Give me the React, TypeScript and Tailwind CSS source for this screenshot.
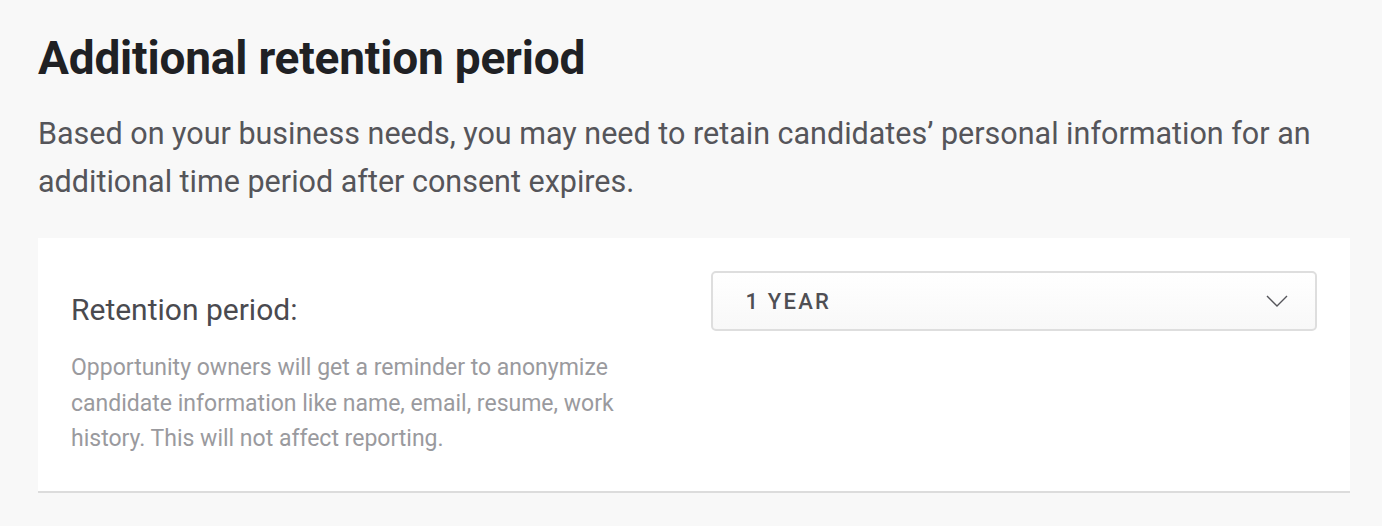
import React from 'react';

const font = { fontFamily: 'Roboto, "Noto Sans", sans-serif' };

export default function App() {
  return (
    <div style={font} className="min-h-[526px] bg-[#f8f8f8] pl-[38px] pr-[32px] pt-[28px] pb-[34px]">
      <h1 className="text-[46px] leading-[60px] font-bold text-[#202124] tracking-[-0.2px]">
        Additional retention period
      </h1>
      <p className="mt-[22px] text-[30.5px] leading-[48px] text-[#55555a]">
        Based on your business needs, you may need to retain candidates’ personal information for an
        additional time period after consent expires.
      </p>
      <div className="mt-[32px] bg-white border-b-2 border-[#dcdcdc] grid grid-cols-2 gap-[33px] px-[33px] pt-[33px] pb-[34px]">
        <div>
          <div className="mt-[21px] text-[30px] leading-[36px] text-[#4a4a4f]">Retention period:</div>
          <p className="mt-[22px] text-[23px] leading-[35.5px] text-[#9a9a9e] max-w-[580px]">
            Opportunity owners will get a reminder to anonymize candidate information like name, email, resume, work
            history. This will not affect reporting.
          </p>
        </div>
        <div>
          <button className="w-full h-[60px] flex items-center justify-between pl-[33px] pr-[27px] rounded-[5px] border-2 border-[#dedede] bg-gradient-to-b from-white to-[#f8f8f8]">
            <span className="text-[22px] font-medium tracking-[2.2px] text-[#4f4f54]">1 YEAR</span>
            <svg width="22" height="12" viewBox="0 0 22 12" fill="none" stroke="#55555a" strokeWidth="1.4">
              <path d="M1 1l10 10L21 1" />
            </svg>
          </button>
        </div>
      </div>
    </div>
  );
}
